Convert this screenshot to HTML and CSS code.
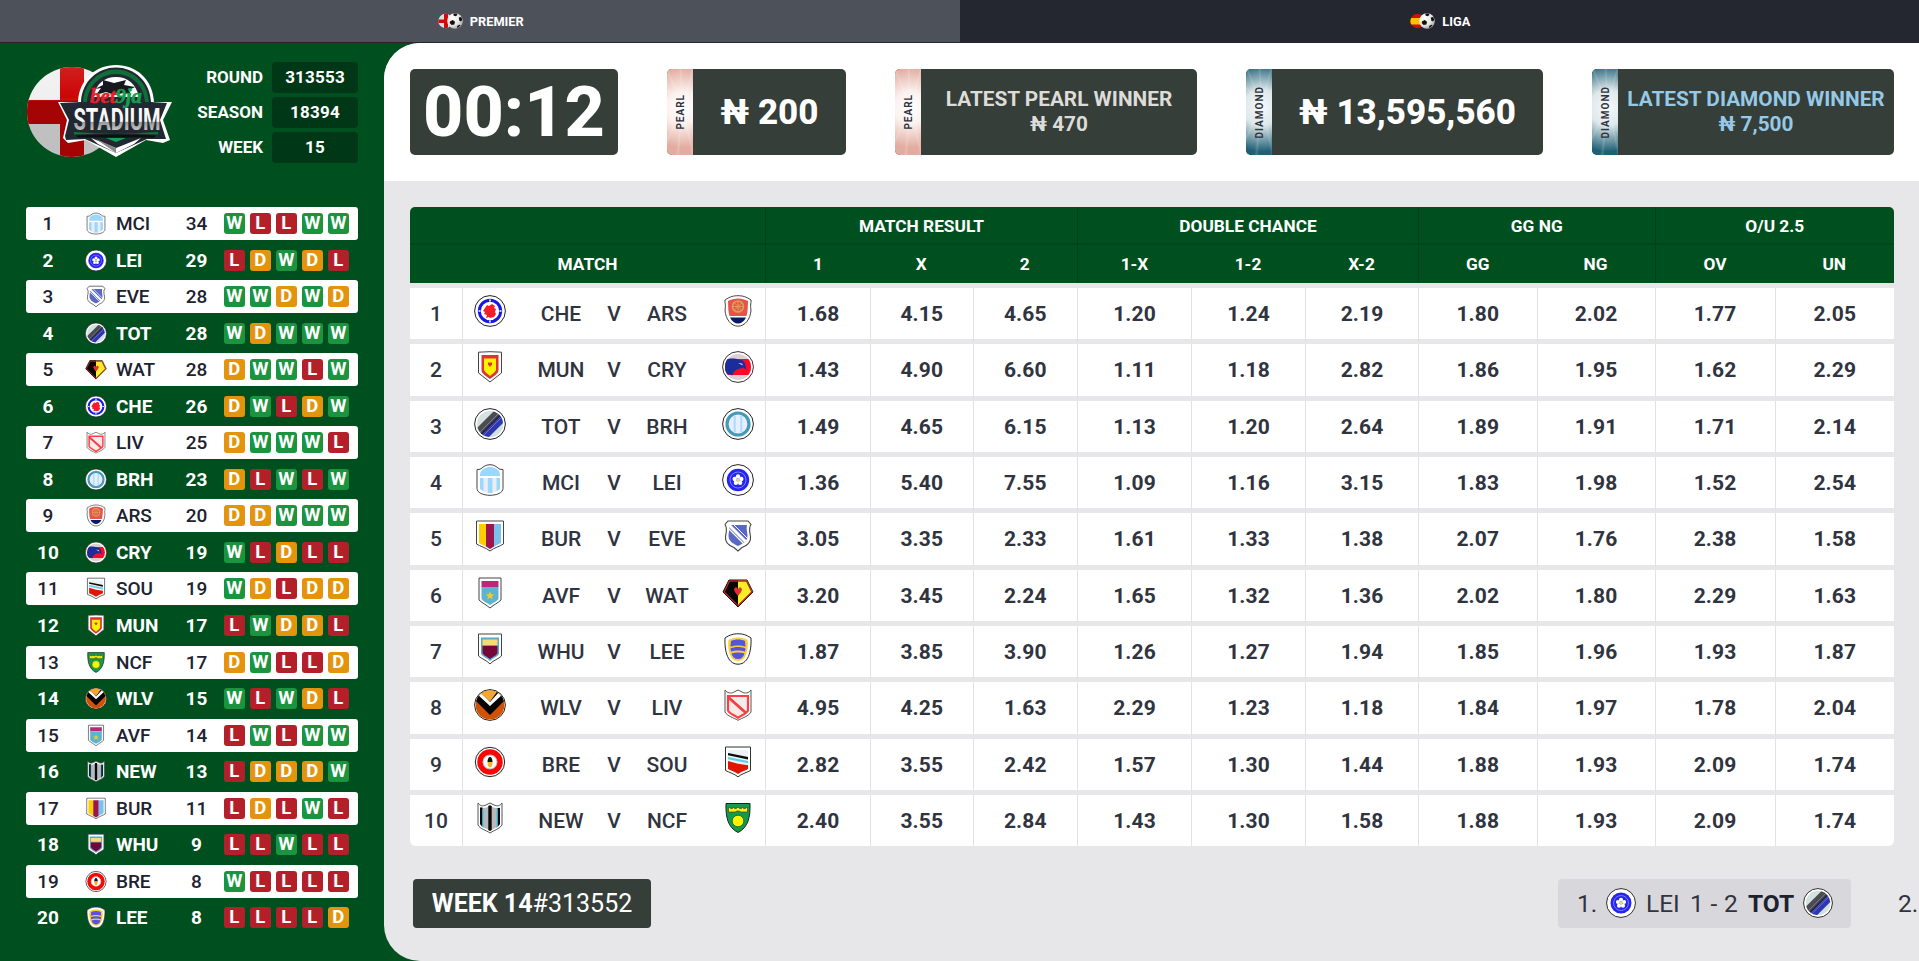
FILE: index.html
```html
<!DOCTYPE html>
<html lang="en">
<head>
<meta charset="utf-8">
<title>Stadium League</title>
<link rel="stylesheet" href="styles.css">
</head>
<body>
<svg class="defs" aria-hidden="true">
  <defs>
    <linearGradient id="steel" x1="0" y1="0" x2="0" y2="1"><stop offset="0" stop-color="#fff"/><stop offset=".55" stop-color="#f4f4f4"/><stop offset=".58" stop-color="#999"/><stop offset="1" stop-color="#eee"/></linearGradient>
    <radialGradient id="shade" cx=".35" cy=".3" r=".8"><stop offset="0" stop-color="#fff"/><stop offset=".6" stop-color="#e4e4e4"/><stop offset="1" stop-color="#999"/></radialGradient>
    <linearGradient id="flagshade" x1="0" y1="0" x2="0" y2="1"><stop offset="0" stop-color="#fff" stop-opacity=".12"/><stop offset=".36" stop-color="#fff" stop-opacity="0"/><stop offset=".4" stop-color="#000" stop-opacity=".2"/><stop offset="1" stop-color="#000" stop-opacity=".2"/></linearGradient>
    <clipPath id="c45"><circle cx="45" cy="48" r="45"/></clipPath>
    <clipPath id="c13"><circle cx="16" cy="16" r="13"/></clipPath>
    <clipPath id="c14"><circle cx="16" cy="16" r="14.4"/></clipPath>
    <clipPath id="c8"><circle cx="7.5" cy="8" r="7.2"/></clipPath>
  </defs>
  <symbol id="ball" viewBox="0 0 16 16"><circle cx="8" cy="8" r="7.8" fill="url(#shade)"/><path d="M3.200 8.200l2.600-1.200 2.200 1.800-.6 2.800-2.800.4L2.700 10zM6.500.6l3.200-.1.800 1.500-2 1.200-2-.6zM11.800 4.500l2.400-.4 1 2.400-1 1.900-1.900-.6zM10.500 12.800l2.100-1.100 1 .5-2.600 2.500-1.200-.3z" fill="#111"/></symbol>

  <symbol id="MCI" viewBox="0 0 32 32"><path d="M3 5.500l3-.2C9 3.500 11 .7 16 .7s7 2.800 10 4.600l3 .2v19c0 4-6 6.800-13 6.800S3 28.500 3 24.500z" fill="#fff" stroke="#444"/><path d="M6 10c1-5 6-7 10-7s9 2 10 7v2H6z" fill="#9bd8ff"/><path d="M6 14h20v11c-3 3-7 4-10 4s-7-1-10-4z" fill="#ecedf0"/><path d="M6 14h3.500v13L6 25zM13.800 14h4.600v15h-4.600zM22.500 14H26v11l-3.500 2z" fill="#9bd8ff"/></symbol>
  <symbol id="LEI" viewBox="0 0 32 32"><circle cx="16" cy="16" r="15.400" fill="#fff" stroke="#222"/><circle cx="16" cy="16" r="11.200" fill="#2424f5"/><circle cx="16" cy="16" r="8" fill="none" stroke="#99f" stroke-width=".8"/><g fill="#fff"><circle cx="16" cy="12.500" r="2.200"/><circle cx="19.300" cy="14.900" r="2.200"/><circle cx="18.100" cy="18.800" r="2.200"/><circle cx="13.900" cy="18.800" r="2.200"/><circle cx="12.700" cy="14.900" r="2.200"/></g><circle cx="16" cy="16" r="1.600" fill="#f2e05a"/></symbol>
  <symbol id="EVE" viewBox="0 0 32 32"><path d="M6 1h20l3 3.500c-2.500 3-1.500 7-.5 12 .8 6-4.500 9.500-8.500 11l-4 3.500-4-3.500c-4-1.500-9.300-5-8.500-11 1-5 2-9-.5-12z" fill="#fff" stroke="#444" stroke-width="1.100"/><path d="M7 5h18c-1 5 .5 7 .5 11 0 5-5 8-9.500 10-4.500-2-9.500-5-9.500-10 0-4 1.500-6 .5-11z" fill="#5868c4"/><path d="M11 4l15 15" stroke="#fff" stroke-width="1"/><path d="M6 8l17 17" stroke="#fff" stroke-width="1.300"/><path d="M7 5l18 18" stroke="#fff" stroke-width="3"/></symbol>
  <symbol id="TOT" viewBox="0 0 32 32"><circle cx="16" cy="16" r="15.400" fill="#fff" stroke="#222"/><g clip-path="url(#c13)"><path d="M0 0h32v32H0z" fill="#d3e2de"/><path d="M-2 25L22 1l6 6L4 31z" fill="#4b4c50"/><path d="M5 30L30 5l5 5-25 25z" fill="#2f36b5"/><path d="M4 26L26 4M8 29L31 6" stroke="#8a8cc8" stroke-width=".7"/><path d="M6 27.500L28 5.500" stroke="#22264f" stroke-width="1.800"/><path d="M13 31L31 13l6 20z" fill="#d3e2de"/></g></symbol>
  <symbol id="WAT" viewBox="0 0 32 32"><path d="M7 3h18l6 12-15 15L1 15z" fill="#f7ee28" stroke="#111"/><path d="M16 3H7L1 15l15 15z" fill="#070707"/><path d="M7.500 4h17l5.300 11L16 28.700 2.200 15z" fill="none" stroke="#b5232b" stroke-width="1.300"/><path d="M12 12l2-2 2 2 2-2 2 2c0 3-2.500 4.500-4 7-1.500-2.500-4-4-4-7z" fill="#e23131"/></symbol>
  <symbol id="CHE" viewBox="0 0 32 32"><circle cx="16" cy="16" r="15.400" fill="#fff" stroke="#222"/><circle cx="16" cy="16" r="10.700" fill="#fff" stroke="#1717e6" stroke-width="3"/><path d="M16 4.500v2M16 25.500v2M4.500 16h2M25.500 16h2" stroke="#fff" stroke-width="1.600"/><path d="M11 13l2-3 2 1 3-2 3 2-1 2 2 1-1 3 1 2-2 3-4 1-1-1-3 1 1-3-3-1 1-2-2-1z" fill="#f51d28"/></symbol>
  <symbol id="LIV" viewBox="0 0 32 32"><path d="M3 1c2 3 6 4 9 2l4-2 4 2c3 2 7 1 9-2v22c-2 4-9 6-13 8.300C12 29 5 27 3 23z" fill="#fff" stroke="#555"/><path d="M6 7h20v14.500c-1 3-6 4.500-10 7.300-4-2.800-9-4.300-10-7.300z" fill="#fbeaea" stroke="#ff4040" stroke-width="2.200"/><path d="M6 8l18 16" stroke="#f04040" stroke-width="2.800"/></symbol>
  <symbol id="BRH" viewBox="0 0 32 32"><circle cx="16" cy="16" r="15.400" fill="#fff" stroke="#222"/><circle cx="16" cy="16" r="11" fill="#e4f0ff" stroke="#4799b8" stroke-width="3.200"/><path d="M11.600 8h2.200v16h-2.200zM18.200 8h2.200v16h-2.200z" fill="#b9dbf7"/></symbol>
  <symbol id="ARS" viewBox="0 0 32 32"><path d="M3 5C8 1.500 12 .7 16 .7S24 1.500 29 5c.4 3-1 4 0 10-.5 9-6 16.200-13 16.200S3.500 24 3 15c1-6-.4-7 0-10z" fill="#fff" stroke="#444"/><path d="M6 6c6-3.500 14-3.500 20 0-.3 6 0 10-1.500 15h-17C6 16 6.300 12 6 6z" fill="#e8524b"/><path d="M8 22.500h16c-2 4-5 6-8 6s-6-2-8-6z" fill="#0b1a66"/><circle cx="16" cy="11.500" r="5.500" fill="none" stroke="#d9a159" stroke-width="1.600"/><path d="M10.500 11.500h11M16 6v11M12 7.500l8 8M20 7.500l-8 8" stroke="#d9a159"/></symbol>
  <symbol id="CRY" viewBox="0 0 32 32"><circle cx="16" cy="16" r="15.400" fill="#fff" stroke="#333"/><g clip-path="url(#c13)"><path d="M0 0h32v32H0z" fill="#dcd0d2"/><path d="M3 8h26v16H3z" fill="#ff0727"/><path d="M3 9c3-2 10-2 14-.5 4 0 6 3 6.500 5.500l1 5-3-2.500-3 1c-4 0-7 3-8 7L3 22z" fill="#1c2d9b"/></g><path d="M16 12l4 .5 1 2z" fill="#e8d8e8"/></symbol>
  <symbol id="SOU" viewBox="0 0 32 32"><path d="M3.500 1h25v23.500c-4 2-9 3.500-12.500 6.300C12.500 28 7.500 26.500 3.500 24.500z" fill="#fff" stroke="#333"/><path d="M6 4h20v19c-3 1.500-7 3-10 5-3-2-7-3.500-10-5z" fill="#edf3f4"/><path d="M6 7l20 4v2.500L6 9.200z" fill="#0c0c0c"/><path d="M6 11l20 4v2.300L6 13.200z" fill="#58d2ea"/><path d="M6 15l10 2.700 10 1.500V23c-3 1.500-7 3-10 5-3-2-7-3.500-10-5z" fill="#e01700"/></symbol>
  <symbol id="MUN" viewBox="0 0 32 32"><path d="M4.500 1.200Q16 .2 27.500 1.200V22L16 31 4.500 22z" fill="#fff" stroke="#444"/><path d="M7.500 4h17v15c0 4-5 6-8.500 9-3.500-3-8.500-5-8.500-9z" fill="#d93636"/><path d="M10 7.500h12V19c-1 2.500-4 4-6 6-2-2-5-3.500-6-6z" fill="#fff200"/><path d="M14 11.500h4v2l-2 2.500-2-2.500z" fill="#d93636"/></symbol>
  <symbol id="NCF" viewBox="0 0 32 32"><path d="M4 1.500h24c.5 14-2 24-12 29C6 25.500 3.500 15.500 4 1.500z" fill="#149a4b" stroke="#222"/><path d="M6.500 5.500h2v1h2v-1h2v1h2v-1h3v1h2v-1h2v1h2v-1h2V10h-7l-1-1h-3l-1 1h-7z" fill="#f7f016" stroke="#333" stroke-width=".6"/><circle cx="16" cy="19" r="5.800" fill="#fff200" stroke="#0b6a30" stroke-width=".8"/></symbol>
  <symbol id="WLV" viewBox="0 0 32 32"><circle cx="16" cy="16" r="15.400" fill="#fff" stroke="#222"/><g clip-path="url(#c14)"><path d="M0 0h32v32H0z" fill="#d15203"/><path d="M0 6L9 2l7 10 7-10 9 4v4L16 26 0 10z" fill="#050505"/><path d="M3 5l3-3 10 11L26 2l3 3-13 12z" fill="#fff"/><path d="M7 0h18L16 12.500 6 4z" fill="#f2a735"/></g></symbol>
  <symbol id="AVF" viewBox="0 0 32 32"><path d="M5 1h22v22c-3 3-7 4.500-11 8-4-3.500-8-5-11-8z" fill="#fff" stroke="#444"/><path d="M7.500 4h17v6h-17z" fill="#b82a78"/><path d="M7.500 10h17v12c-2 2.500-5.500 4-8.500 6-3-2-6.500-3.500-8.500-6z" fill="#5cb4d2"/><path d="M16 14.500l1.200 2.800 3 .2-2.300 1.900.8 2.900-2.700-1.600-2.700 1.600.8-2.900-2.300-1.900 3-.2z" fill="#f4cb22"/></symbol>
  <symbol id="NEW" viewBox="0 0 32 32"><path d="M4 1c2 3 5 3.500 8 2l4-2 4 2c3 1.500 6 1 8-2v22c-2 4-8 5-12 8-4-3-10-4-12-8z" fill="#fff" stroke="#555"/><path d="M6 5.500c3 1 7 .5 10-2 3 2.500 7 3 10 2V22c-1 3-6 4-10 7-4-3-9-4-10-7z" fill="#b9b9bb"/><path d="M6 5.500h2.500V25L6 22zM14.300 4L16 3.200l1.700.8v24L16 29l-1.700-1zM23.500 6H26v16l-2.500 3z" fill="#090909"/><path d="M8.500 7H10v19l-1.500-1zM22 7h1.500v18L22 26z" fill="#5ecbe6"/></symbol>
  <symbol id="BUR" viewBox="0 0 32 32"><path d="M2.500 1h27v23c-4 2.500-9 3.500-13.500 7C11.500 27.500 6.500 26.500 2.500 24z" fill="#fff" stroke="#444"/><path d="M5 4h7v22.500L5 23z" fill="#fdce00"/><path d="M12 4h8v22.500L16 29l-4-2.500z" fill="#9b1650"/><path d="M20 4h7v19l-7 3.500z" fill="#7cc0ec"/></symbol>
  <symbol id="WHU" viewBox="0 0 32 32"><path d="M4.500 1h23v22c-3 3-8 4-11.500 8-3.500-4-8.500-5-11.500-8z" fill="#fff" stroke="#444"/><path d="M7 4.500h18V21c-2 3-6 4-9 7-3-3-7-4-9-7z" fill="#5ba9c9"/><path d="M8.500 6.500h15V12h-15z" fill="#f9d978"/><path d="M8.500 13h15v7c-1.500 3-5 3.800-7.500 6-2.500-2.200-6-3-7.500-6z" fill="#74063a"/></symbol>
  <symbol id="BRE" viewBox="0 0 32 32"><circle cx="16" cy="16" r="14.700" fill="#fff" stroke="#222"/><circle cx="16" cy="16" r="10" fill="#fff" stroke="#fb0505" stroke-width="5.500"/><circle cx="16" cy="16" r="7" fill="none" stroke="#aaa" stroke-width=".8"/><path d="M13.500 16c0-3 1-5 2.500-5s2.500 2 2.500 5z" fill="#111"/><path d="M13.500 16h5c0 3-1 5.500-2.500 5.500S13.500 19 13.500 16z" fill="#f4b51c"/></symbol>
  <symbol id="LEE" viewBox="0 0 32 32"><path d="M3 5C8 1.500 12 .8 16 .8S24 1.500 29 5c.5 9-1 26.200-13 26.200S2.500 14 3 5z" fill="#fff" stroke="#222"/><path d="M6.500 7c5-3.500 14-3.500 19 0 1 9-1 21-9.500 21S5.500 16 6.500 7z" fill="#fbca3f"/><path d="M9 8c4-2 10-2 14 0l.5 5.500c-4-1.500-11-1.500-15 0zM8.500 15.500c4-2 11-2 15 0l-.5 3c-3-1.500-11-1.500-14 0zM9.500 20.500c4-1.500 9-1.500 13 0-1 3.500-3 5.500-6.500 5.500s-5.500-2-6.500-5.500z" fill="#5454e0"/></symbol>
</svg>

<nav class="tabs">
  <a class="tab tab--active"><svg class="tab__icon" viewBox="0 0 25 16"><g clip-path="url(#c8)"><path d="M0 0h16v16H0z" fill="#ddd"/><path d="M6 0h4v16H6zM0 6.500h16v3.500H0z" fill="#d40808"/></g><use href="#ball" x="9" y="0" width="16" height="16"/></svg>PREMIER</a>
  <a class="tab"><svg class="tab__icon" viewBox="0 0 25 16"><g clip-path="url(#c8)"><path d="M0 0h16v16H0z" fill="#c9100a"/><path d="M0 5h16v6.500H0z" fill="#f6c500"/></g><use href="#ball" x="9" y="0" width="16" height="16"/></svg>LIGA</a>
</nav>

<div class="page">
  <aside class="sidebar">
    <header class="league">
      <svg class="logo" viewBox="0 0 146 94">
        <g clip-path="url(#c45)"><path d="M0 0h92v94H0z" fill="#f0f0f0"/><path d="M33 0h24v94H33zM0 36h92v24H0z" fill="#cc0404"/><path d="M0 0h92v94H0z" fill="url(#flagshade)"/></g>
        <path d="M51 38C52 15 69 1 89 1s37 14 38 37h18l-9 18 7 20-7 3-17-3-30 17-30-17-18 3-5-5 4-18-9-18z" fill="#fff"/>
        <path d="M54 38C55 17 71 3.500 89 3.500S123 17 124 38l16 1-7 17 6 19-19 0-31 14-31-14-19 1-1-4 4-16-9-17z" fill="#222832"/>
        <path d="M56 38C57 19 72 5.500 89 5.500S121 19 122 38h-4C117 21 104 10 89 10S61 21 60 38z" fill="#0d7038"/>
        <path d="M66 33C69 20 77 13 89 13s20 7 23 20z" fill="#fff"/><path d="M76 16l11 3 12-3-2 5 11 2-6 3 2 5-8-2-8 2-9-3-10 3 5-7-6 1 8-4z" fill="#15181c"/>
        <text x="63" y="39" class="logo__bet" textLength="52" lengthAdjust="spacingAndGlyphs">bet<tspan class="logo__nine">9ja</tspan></text>
        <text x="46.500" y="66" class="logo__name" textLength="87" lengthAdjust="spacingAndGlyphs">STADIUM</text>
        <path d="M47 68q42 3 84 0v2.500q-42-2-84 0z" fill="#087a37"/><path d="M49 71.500q40-2 80 0l-2 2H51z" fill="#07130e"/>
        <path d="M64 74l25 10 25-10-7 6-18 9-18-9z" fill="#fff"/><path d="M69 75l20 9v5z" fill="#888"/><path d="M79 74h20l-10 4z" fill="#13a054"/>
      </svg>
      <dl class="facts">
        <dt>ROUND</dt><dd>313553</dd>
        <dt>SEASON</dt><dd>18394</dd>
        <dt>WEEK</dt><dd>15</dd>
      </dl>
    </header>
    <ol class="standings" id="standings"></ol>
  </aside>

  <main class="main">
    <section class="panels">
      <div class="panel panel--timer">00:12</div>
      <div class="panel panel--p1"><div class="strip strip--pearl"><span>PEARL</span></div><div class="panel__body amount">₦ 200</div></div>
      <div class="panel panel--p2"><div class="strip strip--pearl"><span>PEARL</span></div><div class="panel__body winner">LATEST PEARL WINNER<br>₦ 470</div></div>
      <div class="panel panel--d1"><div class="strip strip--diamond"><span>DIAMOND</span></div><div class="panel__body amount">₦ 13,595,560</div></div>
      <div class="panel panel--d2"><div class="strip strip--diamond"><span>DIAMOND</span></div><div class="panel__body winner winner--diamond">LATEST DIAMOND WINNER<br>₦ 7,500</div></div>
    </section>

    <section class="odds">
      <div class="odds__head odds__groups"><span class="g-match"></span><span class="g-three">MATCH RESULT</span><span class="g-three">DOUBLE CHANCE</span><span class="g-two">GG NG</span><span class="g-two">O/U 2.5</span></div>
      <div class="odds__head odds__names"><span class="g-match">MATCH</span><span>1</span><span>X</span><span>2</span><span class="edge">1-X</span><span>1-2</span><span>X-2</span><span class="edge">GG</span><span>NG</span><span class="edge">OV</span><span>UN</span></div>
      <div class="odds__body" id="odds"></div>
    </section>

    <footer class="ticker">
      <div class="ticker__week"><b>WEEK 14</b>#313552</div>
      <div class="ticker__track">
        <div class="result"><span class="result__no">1.</span><svg class="result__crest"><use href="#LEI"/></svg><span class="result__home">LEI</span><span class="result__score">1 - 2</span><b>TOT</b><svg class="result__crest"><use href="#TOT"/></svg></div>
        <div class="result result--plain"><span>2.</span></div>
      </div>
    </footer>
  </main>
</div>
<script src="app.js"></script>
</body>
</html>
```

FILE: styles.css
```css
* { box-sizing: border-box; }

body {
  margin: 0;
  height: 961px;
  display: flex;
  flex-direction: column;
  overflow: hidden;
  font-family: Roboto, "Liberation Sans", sans-serif;
  color: #30343f;
  background: #00501f;
}

.defs { position: absolute; width: 0; height: 0; }

/* League tabs */
.tabs { display: flex; flex: none; height: 43px; background: #242730; border-bottom: 1px solid #242730; }
.tab { flex: 1; display: flex; align-items: center; justify-content: center; gap: 7px; padding-left: 2px; font-size: 12.800px; font-weight: 700; color: #fff; }
.tab--active { background: #4d5159; }
.tab__icon { width: 25px; height: 16px; }

.page { flex: 1; display: flex; min-height: 0; }

/* Sidebar */
.sidebar { flex: none; width: 384px; padding: 19px 26px 0; color: #fff; }
.league { display: flex; justify-content: space-between; height: 145px; padding-left: 1px; }
.logo { width: 146px; height: 94px; margin-top: 2px; overflow: visible; }
.logo__bet { font: italic 700 21px "Liberation Serif", serif; fill: #e3202b; stroke: #e3202b; stroke-width: .6; }
.logo__nine { fill: #12a050; stroke: #12a050; }
.logo__name { font: 700 31px Roboto, sans-serif; fill: url(#steel); }
.facts { display: grid; grid-template-columns: auto 86px; grid-auto-rows: 30.500px; gap: 4.500px 9px; margin: 0; font-size: 17px; font-weight: 700; }
.facts dt { text-align: right; line-height: 31px; }
.facts dd { margin: 0; text-align: center; line-height: 31px; background: #003716; border-radius: 4px; letter-spacing: .2px; }

.standings { list-style: none; margin: 0; padding: 0; display: grid; grid-auto-rows: 33px; row-gap: 3.560px; }
.club { display: grid; grid-template-columns: 44px 46px 59px 43px 1fr; align-items: center; border-radius: 3px; font-size: 19px; font-weight: 700; }
.club:nth-child(odd) { background: #fff; color: #1d2230; font-weight: 500; }
.club__rank, .club__points { text-align: center; }
.club__crest { width: 22px; height: 23px; margin-left: 15px; }
.club__name { letter-spacing: -.1px; }
.club__form { display: flex; gap: 5.400px; padding-left: 6px; }
.chip { width: 20.600px; height: 21px; border-radius: 3px; text-align: center; font-size: 18.500px; line-height: 21px; font-weight: 700; color: #fff; }
.chip--W { background: #1a943f; }
.chip--L { background: #b4202a; }
.chip--D { background: #e4940c; }

/* Main area */
.main { flex: 1; min-width: 0; display: flex; flex-direction: column; background: #e7e7e9; border-radius: 36px 0 0 36px; overflow: hidden; }

.panels { flex: none; height: 138px; padding: 26px 25px 26px 26px; display: flex; justify-content: space-between; background: #fff; }
.panel { display: flex; height: 86px; border-radius: 5px; overflow: hidden; background: #353e38; color: #fff; }
.panel--timer { width: 208px; align-items: center; justify-content: center; font-size: 70px; font-weight: 800; }
.panel--p1 { width: 179px; }
.panel--p2, .panel--d2 { width: 302px; }
.panel--d1 { width: 297px; }
.panel__body { flex: 1; display: flex; align-items: center; justify-content: center; white-space: nowrap; }
.amount { font-size: 35px; font-weight: 800; }
.winner { display: block; padding-top: 18px; text-align: center; font-size: 20.800px; line-height: 25.400px; font-weight: 700; color: #dedcd8; }
.winner--diamond { color: #95c9e5; }
.strip { flex: none; width: 26px; display: flex; align-items: center; justify-content: center; color: #30343f; }
.strip span { writing-mode: vertical-rl; transform: rotate(180deg); font-size: 10px; font-weight: 700; letter-spacing: 1px; }
.strip--pearl { background: repeating-conic-gradient(from 4deg at 60% 45%, #fff0 0 8deg, #ffffff30 11deg, #fff0 14deg 19deg), radial-gradient(circle at 60% 45%, #fff 0, #fbf1ee 16px, #e3aca0 40px); }
.strip--diamond { background: repeating-conic-gradient(from 4deg at 60% 42%, #fff0 0 8deg, #ffffff28 11deg, #fff0 14deg 19deg), radial-gradient(circle at 60% 45%, #f6f9fa 0, #dde7ea 18px, #1f5f75 44px); }

/* Odds table */
.odds { flex: none; width: 1484px; margin: 26px 0 0 26px; border-radius: 5px; overflow: hidden; }
.odds__head, .fixture { display: grid; grid-template-columns: 355px 105px 102.500px 104.500px 114px 114px 113px 118.500px 118px 120px 119.500px; }
.odds__head { height: 38px; background: #00501f; color: #fff; font-size: 17.300px; font-weight: 700; text-align: center; line-height: 38px; }
.odds__groups { border-bottom: 2px solid #00461b; }
.g-three { grid-column: span 3; border-left: 1px solid #00401a; }
.g-two { grid-column: span 2; border-left: 1px solid #00401a; }
.odds__names .g-match + span, .edge { border-left: 1px solid #00401a; }
.odds__body { display: grid; grid-auto-rows: 51.330px; row-gap: 5px; padding-top: 5px; }
.fixture { background: #fff; align-items: stretch; font-size: 21px; line-height: 53.600px; text-align: center; }
.fixture__match { display: grid; grid-template-columns: 52px 56px 86px 20px 86px 1fr; font-weight: 500; }
.fixture__home { border-left: 1px solid #e2e2e4; padding-left: 11px; }
.fixture__crest { display: block; width: 32px; height: 32px; margin-top: 7px; }
.fixture__away { padding-left: 12px; }
.odd { border-left: 1px solid #e2e2e4; font-weight: 700; letter-spacing: .1px; }
.odds__body .fixture:last-child { border-radius: 0 0 5px 5px; }

/* Results ticker */
.ticker { display: flex; align-items: center; margin: 32px 0 0 29px; height: 50px; font-size: 25px; }
.ticker__week { flex: none; width: 238px; height: 49px; border-radius: 4px; background: #353e38; color: #fff; text-align: center; line-height: 49px; }
.ticker__track { flex: 1; min-width: 0; display: flex; gap: 28px; padding-left: 907px; overflow: hidden; }
.result { flex: none; width: 293px; height: 49px; padding: 0 18px 0 19px; display: flex; align-items: center; border-radius: 4px; background: #d8d7db; font-size: 24.500px; line-height: 49px; white-space: pre; }
.result b { color: #1d2230; }
.result__crest { width: 30px; height: 30px; }
.result__no { width: 29px; }
.result__home { width: 44px; padding-left: 10px; margin-right: 0; }
.result__score { width: 68px; text-align: center; letter-spacing: .3px; }
.result b + .result__crest { margin-left: auto; }
.result--plain { background: none; }
```

FILE: app.js
```js
const standings = [
  ["MCI", 34, "WLLWW"], ["LEI", 29, "LDWDL"], ["EVE", 28, "WWDWD"], ["TOT", 28, "WDWWW"],
  ["WAT", 28, "DWWLW"], ["CHE", 26, "DWLDW"], ["LIV", 25, "DWWWL"], ["BRH", 23, "DLWLW"],
  ["ARS", 20, "DDWWW"], ["CRY", 19, "WLDLL"], ["SOU", 19, "WDLDD"], ["MUN", 17, "LWDDL"],
  ["NCF", 17, "DWLLD"], ["WLV", 15, "WLWDL"], ["AVF", 14, "LWLWW"], ["NEW", 13, "LDDDW"],
  ["BUR", 11, "LDLWL"], ["WHU", 9, "LLWLL"], ["BRE", 8, "WLLLL"], ["LEE", 8, "LLLLD"]
];

const fixtures = [
  ["CHE", "ARS", "1.68 4.15 4.65 1.20 1.24 2.19 1.80 2.02 1.77 2.05"],
  ["MUN", "CRY", "1.43 4.90 6.60 1.11 1.18 2.82 1.86 1.95 1.62 2.29"],
  ["TOT", "BRH", "1.49 4.65 6.15 1.13 1.20 2.64 1.89 1.91 1.71 2.14"],
  ["MCI", "LEI", "1.36 5.40 7.55 1.09 1.16 3.15 1.83 1.98 1.52 2.54"],
  ["BUR", "EVE", "3.05 3.35 2.33 1.61 1.33 1.38 2.07 1.76 2.38 1.58"],
  ["AVF", "WAT", "3.20 3.45 2.24 1.65 1.32 1.36 2.02 1.80 2.29 1.63"],
  ["WHU", "LEE", "1.87 3.85 3.90 1.26 1.27 1.94 1.85 1.96 1.93 1.87"],
  ["WLV", "LIV", "4.95 4.25 1.63 2.29 1.23 1.18 1.84 1.97 1.78 2.04"],
  ["BRE", "SOU", "2.82 3.55 2.42 1.57 1.30 1.44 1.88 1.93 2.09 1.74"],
  ["NEW", "NCF", "2.40 3.55 2.84 1.43 1.30 1.58 1.88 1.93 2.09 1.74"]
];

const crest = (code, cls) => `<svg class="${cls}"><use href="#${code}"/></svg>`;

document.getElementById("standings").innerHTML = standings.map(([code, points, form], i) => `
  <li class="club">
    <span class="club__rank">${i + 1}</span>${crest(code, "club__crest")}
    <span class="club__name">${code}</span><span class="club__points">${points}</span>
    <span class="club__form">${[...form].map(r => `<span class="chip chip--${r}">${r}</span>`).join("")}</span>
  </li>`).join("");

document.getElementById("odds").innerHTML = fixtures.map(([home, away, odds], i) => `
  <div class="fixture">
    <div class="fixture__match">
      <span>${i + 1}</span><div class="fixture__home">${crest(home, "fixture__crest")}</div>
      <span>${home}</span><span>V</span><span>${away}</span>
      <div class="fixture__away">${crest(away, "fixture__crest")}</div>
    </div>
    ${odds.split(" ").map(o => `<span class="odd">${o}</span>`).join("")}
  </div>`).join("");
```
